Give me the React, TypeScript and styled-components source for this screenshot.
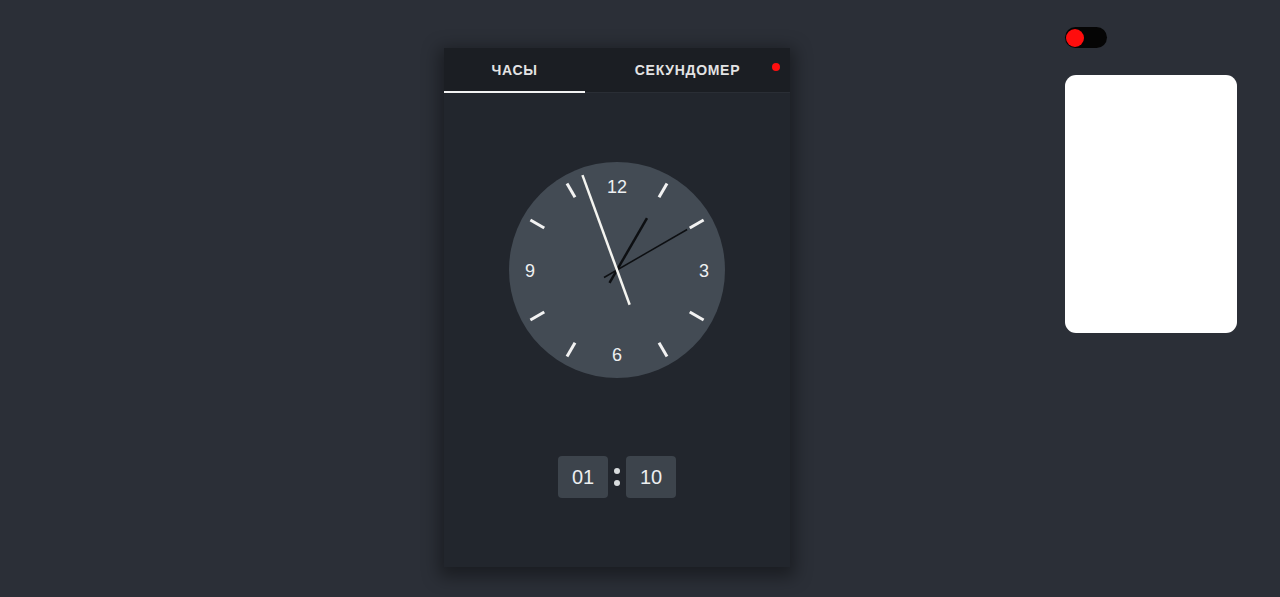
import React from "react";
import styled, { createGlobalStyle } from "styled-components";

const Global = createGlobalStyle`
  html, body { margin: 0; padding: 0; background: #2b2f37; }
  body { font-family: "Liberation Sans", Arial, sans-serif; width: 1280px; height: 597px; overflow: hidden; }
`;

const Page = styled.div`
  position: relative;
  width: 1280px;
  height: 597px;
  background: #2b2f37;
  display: flex;
  align-items: flex-start;
`;

const CardColumn = styled.div`
  margin-left: 444px;
  margin-top: 48px;
`;

const Card = styled.div`
  width: 346px;
  height: 519px;
  background: #22262d;
  box-shadow: 0 5px 16px 5px rgba(0, 0, 0, 0.38);
  display: flex;
  flex-direction: column;
`;

const TabBar = styled.div`
  position: relative;
  display: flex;
  height: 45px;
  background: #1b1e23;
  border-bottom: 1px solid #2a2e35;
  box-sizing: border-box;
`;

const Tab = styled.div<{ $active?: boolean; $w?: number }>`
  ${(p) => (p.$w ? `width: ${p.$w}px;` : "flex: 1;")}
  display: flex;
  align-items: center;
  justify-content: center;
  color: #e3e3e3;
  font-size: 14px;
  font-weight: 700;
  letter-spacing: 0.7px;
  box-sizing: border-box;
  padding-top: 1px;
  border-bottom: 2px solid ${(p) => (p.$active ? "#f2f2f2" : "transparent")};
  margin-bottom: -1px;
`;

const Dot = styled.span`
  position: absolute;
  right: 10px;
  top: 15px;
  width: 8px;
  height: 8px;
  border-radius: 50%;
  background: #ff0f0f;
`;

const Body = styled.div`
  flex: 1;
  display: flex;
  flex-direction: column;
  align-items: center;
  padding-top: 69px;
`;

const ClockSvg = styled.svg`
  display: block;
`;

const Digital = styled.div`
  display: flex;
  align-items: center;
  gap: 5px;
  margin-top: 78px;
`;

const Box = styled.div`
  width: 50px;
  height: 42px;
  border-radius: 4px;
  background: #3d444c;
  color: #eceef0;
  font-size: 20px;
  display: flex;
  align-items: center;
  justify-content: center;
`;

const Colon = styled.div`
  display: flex;
  flex-direction: column;
  gap: 6px;
  width: 8px;
  align-items: center;
`;

const ColonDot = styled.span`
  width: 6px;
  height: 6px;
  border-radius: 50%;
  background: #d9dcde;
`;

const Side = styled.div`
  margin-left: 275px;
  margin-top: 27px;
  display: flex;
  flex-direction: column;
  gap: 27px;
`;

const Toggle = styled.div`
  width: 42px;
  height: 21px;
  border-radius: 11px;
  background: #050505;
  display: flex;
  align-items: center;
  padding-left: 1px;
  box-sizing: border-box;
`;

const Knob = styled.span`
  width: 18px;
  height: 18px;
  border-radius: 50%;
  background: #ff0d0d;
`;

const WhiteCard = styled.div`
  width: 172px;
  height: 258px;
  border-radius: 11px;
  background: #ffffff;
`;

const Clock: React.FC = () => {
  const cx = 108;
  const cy = 108;
  const ticks = [1, 2, 4, 5, 7, 8, 10, 11];
  const hand = (angle: number, len: number, tail: number) => {
    const a = (angle * Math.PI) / 180;
    const sx = Math.sin(a);
    const sy = -Math.cos(a);
    return {
      x1: cx - sx * tail,
      y1: cy - sy * tail,
      x2: cx + sx * len,
      y2: cy + sy * len,
    };
  };
  const hour = hand(30, 60, 15);
  const minute = hand(60, 81, 15);
  const second = hand(340, 101, 37);
  return (
    <ClockSvg width="216" height="216" viewBox="0 0 216 216">
      <circle cx={cx} cy={cy} r={108} fill="#434b54" />
      {ticks.map((t) => {
        const a = (t * 30 * Math.PI) / 180;
        const sx = Math.sin(a);
        const sy = -Math.cos(a);
        return (
          <line
            key={t}
            x1={cx + sx * 84}
            y1={cy + sy * 84}
            x2={cx + sx * 100}
            y2={cy + sy * 100}
            stroke="#f2f2f2"
            strokeWidth={3}
          />
        );
      })}
      <g fill="#eef0f2" fontSize="18" fontFamily="'Liberation Sans', Arial, sans-serif" textAnchor="middle">
        <text x={cx} y={cy - 77}>12</text>
        <text x={cx + 87} y={cy + 7}>3</text>
        <text x={cx} y={cy + 91}>6</text>
        <text x={cx - 87} y={cy + 7}>9</text>
      </g>
      <line {...hour} stroke="#0d0f12" strokeWidth={2.5} />
      <line {...minute} stroke="#0d0f12" strokeWidth={1.5} />
      <line {...second} stroke="#f4f4f0" strokeWidth={2.5} />
    </ClockSvg>
  );
};

export default function App() {
  return (
    <>
      <Global />
      <Page>
        <CardColumn>
          <Card>
            <TabBar>
              <Tab $active $w={141}>ЧАСЫ</Tab>
              <Tab>СЕКУНДОМЕР</Tab>
              <Dot />
            </TabBar>
            <Body>
              <Clock />
              <Digital>
                <Box>01</Box>
                <Colon>
                  <ColonDot />
                  <ColonDot />
                </Colon>
                <Box>10</Box>
              </Digital>
            </Body>
          </Card>
        </CardColumn>
        <Side>
          <Toggle>
            <Knob />
          </Toggle>
          <WhiteCard />
        </Side>
      </Page>
    </>
  );
}
